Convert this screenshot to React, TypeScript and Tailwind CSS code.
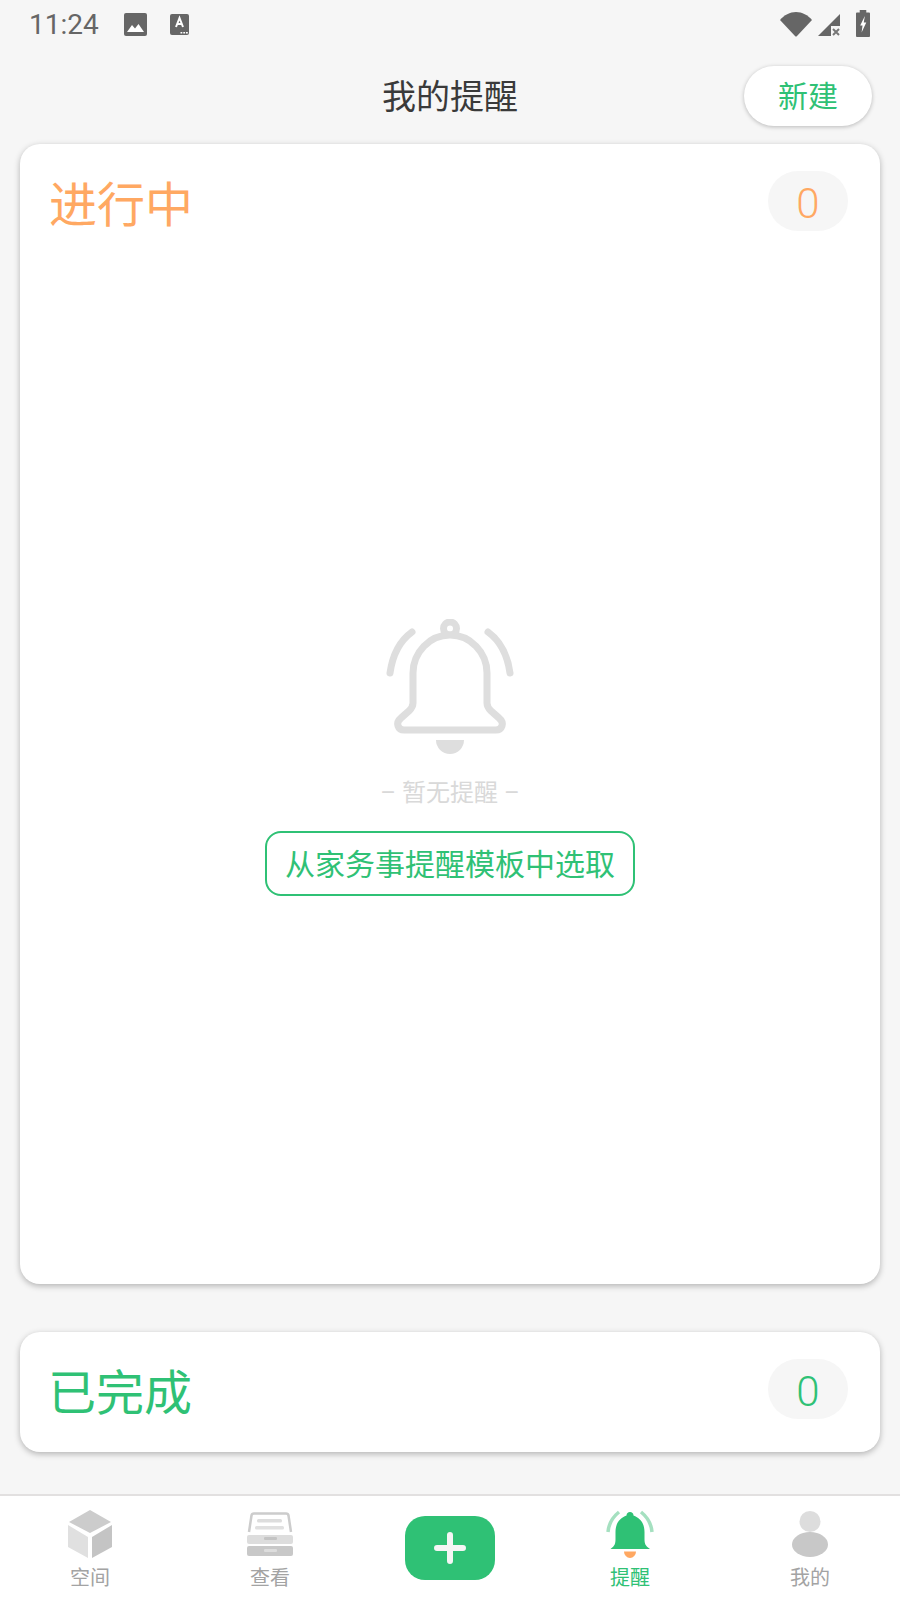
import React from 'react';

const cjk = "font-['Roboto','Noto_Sans_CJK_SC',sans-serif]";

function StatusBar() {
  return (
    <div className="h-[50px] flex items-center justify-between pl-[29px] pr-[30px] shrink-0">
      <div className="flex items-center">
        <span className="font-['Roboto',sans-serif] text-[28px] leading-[50px] text-[#666] w-[95px]">11:24</span>
        <svg width="23" height="23" viewBox="0 0 23 23" className="-mt-[2px]">
          <rect width="23" height="23" rx="2" fill="#666" />
          <path d="M3 19 L8 12 L11 15.5 L14.5 11 L20 19 Z" fill="#fff" />
        </svg>
        <svg width="19" height="21" viewBox="0 0 19 21" className="ml-[23px] -mt-[2px]">
          <rect width="19" height="21" rx="2" fill="#666" />
          <path d="M6 13 L9.5 4 L13 13 M7.3 10 H11.7" stroke="#fff" strokeWidth="2" fill="none" />
          <path d="M10.5 18 h1.8 v1.6 h-1.8 z M13.3 18 h1.8 v1.6 h-1.8 z M16 18 h1.8 v1.6 H16 z" fill="#fff" />
        </svg>
      </div>
      <div className="flex items-center -mt-[2px]">
        <svg width="32" height="25" viewBox="0 0 32 25">
          <path d="M0 8 C4 3 10 0 16 0 S28 3 32 8 L17 24 Q16 25 15 24 Z" fill="#666" />
        </svg>
        <svg width="22" height="23" viewBox="0 0 22 23" className="ml-[6px] mt-[2px]">
          <path d="M22 0 V12 H13 V22 H0 Z" fill="#666" />
          <path d="M15 15 L21 21 M21 15 L15 21" stroke="#777" strokeWidth="2" />
        </svg>
        <svg width="14" height="27" viewBox="0 0 15 27" preserveAspectRatio="none" className="ml-[16px] -mt-[1px]">
          <path d="M4 0 H11 V2.500 H14 Q15 2.500 15 3.500 V26 Q15 27 14 27 H1 Q0 27 0 26 V3.500 Q0 2.500 1 2.500 H4 Z" fill="#666" />
          <path d="M9.500 6 L4.500 15.500 H7 L6 22.500 L11 12.500 H8.300 Z" fill="#fff" />
        </svg>
      </div>
    </div>
  );
}

function CountPill({ color }: { color: string }) {
  return (
    <div className={`w-[80px] h-[60px] rounded-full bg-[#f6f6f6] flex items-center justify-center font-['Roboto',sans-serif] font-light text-[42px] pt-[4px] ${color}`}>
      0
    </div>
  );
}

function EmptyBell() {
  return (
    <svg width="128" height="136" viewBox="0 0 128 136" fill="none" stroke="#dedede" strokeWidth="7" strokeLinecap="round">
      <circle cx="64" cy="9.500" r="6.500" />
      <path d="M27 54 C27 33.500 43.500 16 64 16 S101 33.500 101 54 V84 C101 88 103 90 105 92 L113 99 C119 104 116 111 110 111 H18 C12 111 9 104 15 99 L23 92 C25 90 27 88 27 84 Z" fill="#fff" />
      <path d="M4 54 Q8 26 26 13" />
      <path d="M124 54 Q120 26 102 13" />
      <path d="M50 121 H78 A14 14 0 0 1 50 121 Z" fill="#dedede" stroke="none" />
    </svg>
  );
}

function CubeIcon() {
  return (
    <svg width="44" height="48" viewBox="0 0 44 48">
      <path d="M22 0 L43 12 L22 23 L1 12 Z" fill="#ccc" />
      <path d="M0 15 L20 27 V48 L0 37 Z" fill="#e0e0e0" />
      <path d="M44 15 L24 27 V48 L44 37 Z" fill="#c4c4c4" />
    </svg>
  );
}

function DrawerIcon() {
  return (
    <svg width="46" height="44" viewBox="0 0 46 44">
      <path d="M2 20 L4.500 3.500 Q4.800 1.500 7 1.500 H39 Q41.200 1.500 41.500 3.500 L44 20" fill="none" stroke="#ccc" strokeWidth="2.500" />
      <rect x="10" y="7" width="25" height="3.500" rx="1.500" fill="#ddd" />
      <rect x="8" y="14" width="29" height="3.500" rx="1.500" fill="#e0e0e0" />
      <rect y="23" width="46" height="9" rx="2" fill="#ddd" />
      <rect x="17" y="25" width="13" height="3" rx="1" fill="#c4c4c4" />
      <rect y="34" width="46" height="10" rx="2" fill="#c8c8c8" />
      <rect x="17" y="37" width="13" height="3" rx="1" fill="#ddd" />
    </svg>
  );
}

function ActiveBell() {
  return (
    <svg width="48" height="48" viewBox="0 0 48 48">
      <path d="M2 22 Q3 10 13 2" fill="none" stroke="#a5e0c0" strokeWidth="3.500" />
      <path d="M46 22 Q45 10 35 2" fill="none" stroke="#a5e0c0" strokeWidth="3.500" />
      <path d="M4.500 39 C9 36 9.500 33 9.500 29 V22 C9.500 13 14 8 20.500 5.500 C20.500 3.500 22 2 24 2 S27.500 3.500 27.500 5.500 C34 8 38.500 13 38.500 22 V29 C38.500 33 39 36 44 39 Z" fill="#2fc175" />
      <path d="M18 41.500 H30 A6 6.500 0 0 1 18 41.500 Z" fill="#ffa862" />
    </svg>
  );
}

function PersonIcon() {
  return (
    <svg width="36" height="46" viewBox="0 0 36 46">
      <circle cx="18" cy="10.500" r="10.500" fill="#ddd" />
      <ellipse cx="18" cy="33.500" rx="18" ry="12.500" fill="#c8c8c8" />
    </svg>
  );
}

function NavItem({ label, active, children }: { label: string; active?: boolean; children: React.ReactNode }) {
  return (
    <div className="flex flex-col items-center">
      <div className="h-[48px] flex items-center justify-center">{children}</div>
      <span className={`text-[20px] leading-[28px] mt-[6px] ${active ? 'text-[#2fc175]' : 'text-[#a3a3a3]'}`}>{label}</span>
    </div>
  );
}

export default function App() {
  return (
    <div className={`w-[900px] h-[1600px] bg-[#f6f6f6] flex flex-col overflow-hidden ${cjk}`}>
      <StatusBar />

      <div className="h-[92px] shrink-0 grid grid-cols-3 items-center px-[28px]">
        <div />
        <h1 className="text-center text-[34px] font-normal text-[#3a3a3a] pt-[2px]">我的提醒</h1>
        <div className="flex justify-end">
          <button className="w-[128px] h-[60px] rounded-full bg-white text-[30px] text-[#2fc175] shadow-[0_1px_4px_rgba(0,0,0,0.25)]">
            新建
          </button>
        </div>
      </div>

      <div className="mt-[2px] mx-[20px] h-[1140px] shrink-0 bg-white rounded-[20px] shadow-[0_2px_6px_rgba(0,0,0,0.28)] flex flex-col">
        <div className="flex items-center justify-between pt-[27px] pl-[29px] pr-[32px]">
          <span className="h-[60px] pt-[5px] text-[48px] leading-[60px] text-[#ffa862]">进行中</span>
          <CountPill color="text-[#ffa862]" />
        </div>
        <div className="flex flex-col items-center pt-[388px]">
          <EmptyBell />
          <div className="mt-[22px] text-[24px] leading-[32px] text-[#d9d9d9]">– 暂无提醒 –</div>
          <button className="mt-[22px] w-[370px] h-[65px] rounded-[16px] border-2 border-[#2fc175] text-[30px] text-[#2fc175] pt-[2px]">
            从家务事提醒模板中选取
          </button>
        </div>
      </div>

      <div className="mt-[48px] mx-[20px] h-[120px] shrink-0 bg-white rounded-[20px] shadow-[0_2px_6px_rgba(0,0,0,0.28)] flex items-center justify-between pl-[28px] pr-[32px] pb-[6px]">
        <span className="h-[60px] pt-[5px] text-[48px] leading-[60px] text-[#2fc175]">已完成</span>
        <CountPill color="text-[#2fc175]" />
      </div>

      <div className="mt-auto h-[106px] shrink-0 bg-white border-t-2 border-[#e2e0e0] grid grid-cols-5 pt-[14px]">
        <NavItem label="空间"><CubeIcon /></NavItem>
        <NavItem label="查看"><DrawerIcon /></NavItem>
        <div className="flex justify-center pt-[6px]">
          <div className="w-[90px] h-[64px] rounded-[20px] bg-[#2fc175] flex items-center justify-center">
            <svg width="32" height="32" viewBox="0 0 32 32">
              <path d="M16 3 V29 M3 16 H29" stroke="#f5f5f5" strokeWidth="6" strokeLinecap="round" />
            </svg>
          </div>
        </div>
        <NavItem label="提醒" active><ActiveBell /></NavItem>
        <NavItem label="我的"><PersonIcon /></NavItem>
      </div>
    </div>
  );
}
